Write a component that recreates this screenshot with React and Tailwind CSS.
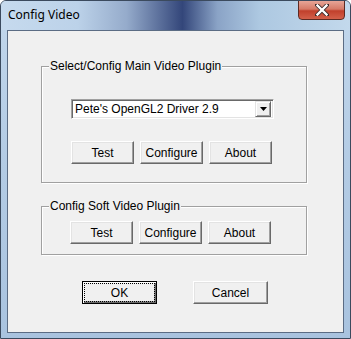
import React from 'react';

const font = { fontFamily: '"Liberation Sans", Arial, sans-serif' };

function Btn({ children, w = 'w-[63px]', focused = false }) {
  if (focused) {
    return (
      <button className={`${w} h-[23px] border border-black bg-[#f0f0f0] p-[1px] text-[12px] text-black shadow-[inset_1px_1px_0_#fff,inset_-1px_-1px_0_#696969,inset_-2px_-2px_0_#a0a0a0]`}>
        <span className="flex h-full w-full items-center justify-center border border-dotted border-black">{children}</span>
      </button>
    );
  }
  return (
    <button className={`${w} h-[23px] flex items-center justify-center border border-t-white border-l-white border-b-[#696969] border-r-[#696969] bg-[#f0f0f0] text-[12px] text-black shadow-[inset_-1px_-1px_0_#a0a0a0,inset_1px_1px_0_#e3e3e3]`}>
      {children}
    </button>
  );
}

function Group({ title, className, children }) {
  return (
    <div className={`relative border border-[#a0a0a0] shadow-[1px_1px_0_#fff,inset_1px_1px_0_#fff] ${className}`}>
      <span className="absolute left-[7px] top-[-8px] bg-[#f0f0f0] px-[1px] text-[12px] leading-[14px] text-black">{title}</span>
      {children}
    </div>
  );
}

export default function App() {
  return (
    <div className="w-[351px] h-[339px] relative overflow-hidden rounded-t-[6px] border border-[#3b4a5e] bg-[linear-gradient(180deg,#c2d7ec_0%,#b3cbe4_50%,#a9c3df_100%)]">
      {/* title bar */}
      <div className="h-[29px] flex items-start justify-between bg-[linear-gradient(90deg,#c6daee_0%,#bcd2e9_22%,#95abcb_36%,#33467a_52%,#8aa3c6_62%,#adc8e1_74%,#c3d9ec_100%)]">
        <span className="pl-[7px] pt-[5px] text-[12px] text-black" style={{ fontFamily: '"Noto Sans", "Open Sans", sans-serif' }}>Config Video</span>
        <div className="mr-[5px] mt-[-1px] w-[47px] h-[20px] flex items-center justify-center rounded-b-[4px] border border-[#5d2a22] bg-[linear-gradient(180deg,#e7a597_0%,#d67a67_45%,#c1402c_55%,#d3604a_100%)]">
          <svg width="14" height="12" viewBox="0 0 14 12">
            <path d="M2 1 L12 11 M12 1 L2 11" stroke="#3a2a2a" strokeWidth="4" strokeLinecap="square" />
            <path d="M2.5 1.5 L11.5 10.5 M11.5 1.5 L2.5 10.5" stroke="#fff" strokeWidth="2.4" strokeLinecap="square" />
          </svg>
        </div>
      </div>
      {/* client area */}
      <div className="mx-[6px] h-[303px] border border-[#5b6c84] bg-[#f0f0f0] pt-[35px] pl-[33px]" style={font}>
        <Group title="Select/Config Main Video Plugin" className="w-[266px] h-[117px] pt-[32px] pl-[29px]">
          <div className="w-[203px] h-[20px] flex items-center bg-white border border-t-[#a0a0a0] border-l-[#a0a0a0] border-b-white border-r-white shadow-[inset_1px_1px_0_#696969,inset_-1px_-1px_0_#e3e3e3] pl-[3px] pr-[2px]">
            <span className="flex-1 text-[12px] text-black">Pete's OpenGL2 Driver 2.9</span>
            <div className="w-[16px] h-[16px] flex items-center justify-center border border-t-[#e3e3e3] border-l-[#e3e3e3] border-b-[#696969] border-r-[#696969] bg-[#f0f0f0] shadow-[inset_1px_1px_0_#fff,inset_-1px_-1px_0_#a0a0a0]">
              <svg width="7" height="4" viewBox="0 0 7 4"><path d="M0 0 H7 L3.5 4 Z" fill="#000" /></svg>
            </div>
          </div>
          <div className="mt-[22px] flex gap-[6px]">
            <Btn>Test</Btn>
            <Btn>Configure</Btn>
            <Btn>About</Btn>
          </div>
        </Group>
        <Group title="Config Soft Video Plugin" className="mt-[23px] w-[266px] h-[49px] pt-[14px] pl-[28px]">
          <div className="flex gap-[6px]">
            <Btn>Test</Btn>
            <Btn>Configure</Btn>
            <Btn>About</Btn>
          </div>
        </Group>
        <div className="mt-[26px] ml-[41px] flex gap-[36px]">
          <Btn w="w-[75px]" focused>OK</Btn>
          <Btn w="w-[75px]">Cancel</Btn>
        </div>
      </div>
    </div>
  );
}
